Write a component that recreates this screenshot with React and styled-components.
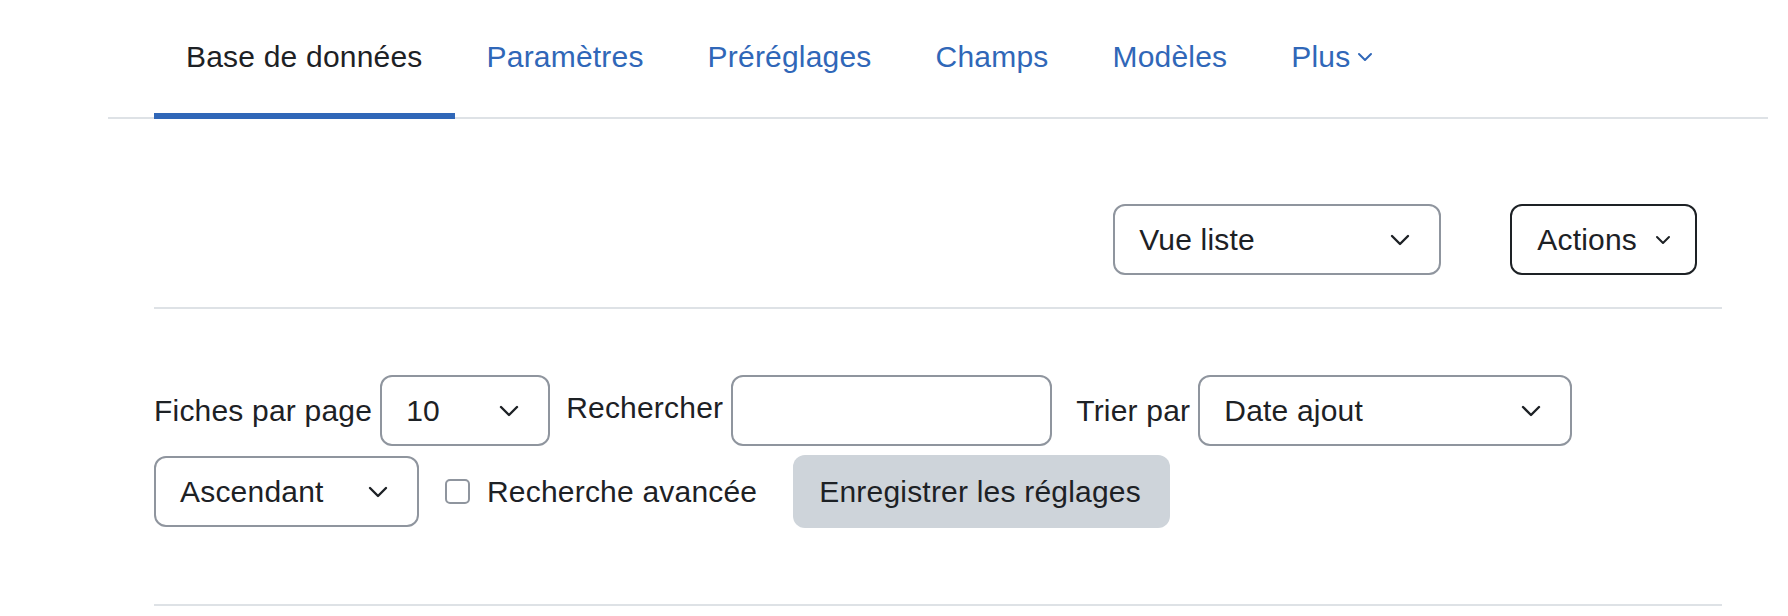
import React from 'react';
import styled, { createGlobalStyle } from 'styled-components';

const GlobalStyle = createGlobalStyle`
  html, body { margin: 0; padding: 0; background: #fff; }
  body {
    font-family: "Liberation Sans", Arial, sans-serif;
    color: #1d2125;
    font-size: 30px;
    line-height: 45px;
    letter-spacing: 0.2px;
  }
  * { box-sizing: border-box; }
`;

const BLUE = '#3067b8';
const TEXT = '#1d2125';
const LINE = '#dee2e6';
const FIELD_BORDER = '#8f959e';

const Page = styled.div`
  width: 1788px;
  height: 616px;
  overflow: hidden;
`;

const NavBar = styled.nav`
  display: flex;
  margin: 0 20px 0 108px;
  padding-left: 46px;
  border-bottom: 2px solid ${LINE};
`;

const Tab = styled.a`
  display: flex;
  align-items: center;
  gap: 7px;
  height: 119px;
  padding: 0 32px 0 32px;
  margin-bottom: -2px;
  border-bottom: 6px solid ${p => (p.$active ? BLUE : 'transparent')};
  color: ${p => (p.$active ? TEXT : BLUE)};
  text-decoration: none;
  white-space: nowrap;
  cursor: pointer;
`;

const Main = styled.main`
  margin-left: 154px;
  width: 1568px;
`;

const Toolbar = styled.div`
  display: flex;
  justify-content: flex-end;
  align-items: center;
  gap: 69px;
  padding: 85px 25px 32px 0;
  border-bottom: 2px solid ${LINE};
`;

const SelectBox = styled.div`
  display: flex;
  align-items: center;
  justify-content: space-between;
  width: ${p => p.$w}px;
  height: 71px;
  padding: 0 29px 0 24px;
  border: 2px solid ${FIELD_BORDER};
  border-radius: 12px;
  background: #fff;
  color: ${TEXT};
  white-space: nowrap;
  margin-right: ${p => p.$mr || 0}px;
`;

const ActionsButton = styled.button`
  display: flex;
  align-items: center;
  gap: 18px;
  height: 71px;
  padding: 0 24px 0 25px;
  border: 2px solid ${TEXT};
  border-radius: 12px;
  background: #fff;
  color: ${TEXT};
  font: inherit;
  letter-spacing: inherit;
  cursor: pointer;
`;

const Form = styled.form`
  display: flex;
  flex-wrap: wrap;
  align-items: center;
  row-gap: 9px;
  padding: 66px 0 76px;
  border-bottom: 2px solid ${LINE};
`;

const Label = styled.label`
  margin-right: ${p => p.$mr || 8}px;
  margin-bottom: ${p => p.$raise || 0}px;
  white-space: nowrap;
  color: ${TEXT};
`;

const TextInput = styled.input`
  width: ${p => p.$w}px;
  height: 71px;
  border: 2px solid ${FIELD_BORDER};
  border-radius: 12px;
  padding: 0 24px;
  font: inherit;
  color: ${TEXT};
  margin-right: ${p => p.$mr || 0}px;
  outline: none;
`;

const CheckBox = styled.span`
  display: inline-block;
  width: 25px;
  height: 25px;
  border: 2px solid ${FIELD_BORDER};
  border-radius: 5px;
  background: #fff;
  margin-right: 17px;
`;

const SaveButton = styled.button`
  height: 73px;
  padding: 0 29px 0 26px;
  border: none;
  border-radius: 12px;
  background: #ced4da;
  color: ${TEXT};
  font: inherit;
  letter-spacing: inherit;
  cursor: pointer;
`;

const Chevron = ({ color = TEXT }) => (
  <svg width="20" height="12" viewBox="0 0 20 12" fill="none">
    <path d="M2 2 L10 10 L18 2" stroke={color} strokeWidth="2.4" strokeLinecap="round" strokeLinejoin="round" />
  </svg>
);

const SmallChevron = ({ color = TEXT }) => (
  <svg width="16" height="10" viewBox="0 0 16 10" fill="none">
    <path d="M2 2 L8 8 L14 2" stroke={color} strokeWidth="2" strokeLinecap="round" strokeLinejoin="round" />
  </svg>
);

const Select = ({ value, w, mr }) => (
  <SelectBox $w={w} $mr={mr}>
    <span>{value}</span>
    <Chevron />
  </SelectBox>
);

export default function App() {
  return (
    <Page>
      <GlobalStyle />
      <NavBar>
        <Tab $active>Base de données</Tab>
        <Tab>Paramètres</Tab>
        <Tab>Préréglages</Tab>
        <Tab>Champs</Tab>
        <Tab>Modèles</Tab>
        <Tab>
          Plus
          <SmallChevron color={BLUE} />
        </Tab>
      </NavBar>
      <Main>
        <Toolbar>
          <Select value="Vue liste" w={328} />
          <ActionsButton type="button">
            Actions
            <SmallChevron />
          </ActionsButton>
        </Toolbar>
        <Form onSubmit={e => e.preventDefault()}>
          <Label>Fiches par page</Label>
          <Select value="10" w={170} mr={16} />
          <Label $raise={7}>Rechercher</Label>
          <TextInput $w={321} $mr={24} />
          <Label>Trier par</Label>
          <Select value="Date ajout" w={374} />
          <Select value="Ascendant" w={265} mr={26} />
          <CheckBox />
          <Label $mr={36}>Recherche avancée</Label>
          <SaveButton type="button">Enregistrer les réglages</SaveButton>
        </Form>
      </Main>
    </Page>
  );
}
